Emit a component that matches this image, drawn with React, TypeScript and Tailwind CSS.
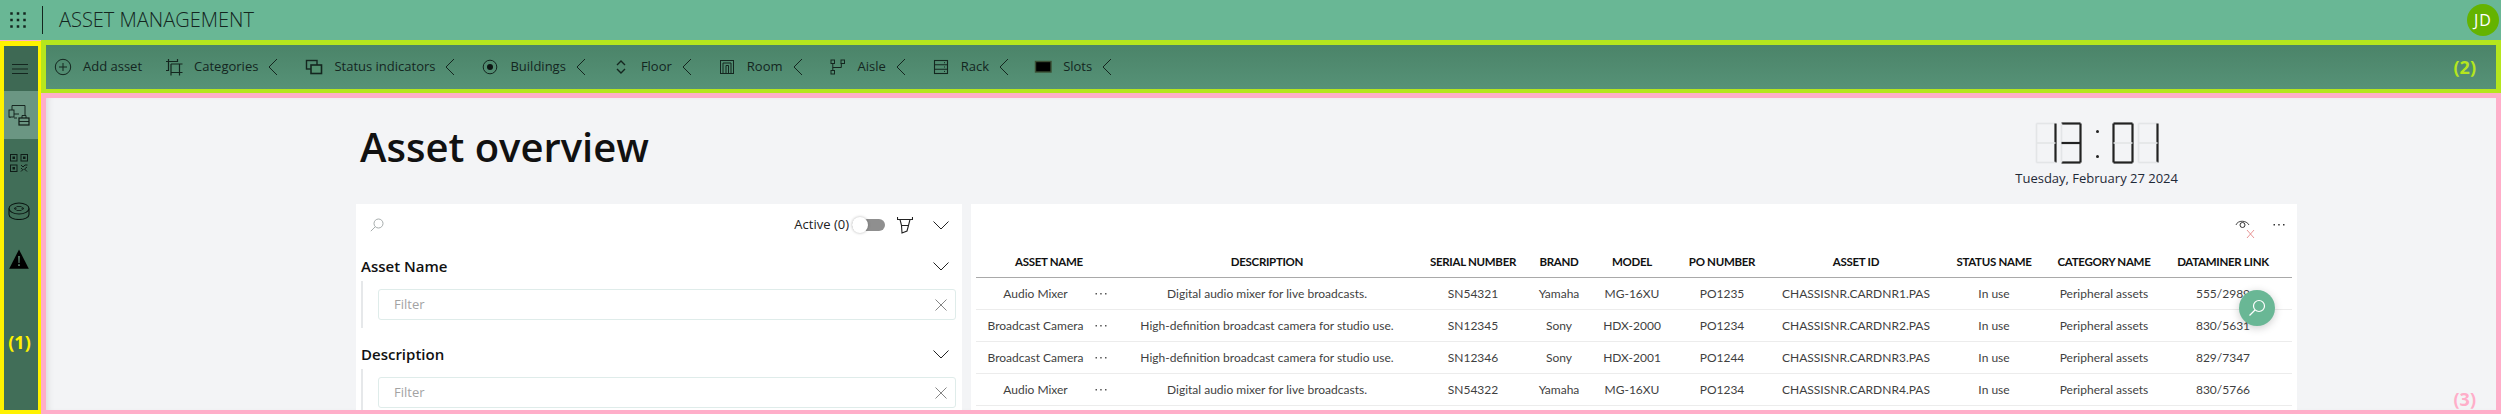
import React from 'react'

const columns = 'grid grid-cols-[146px_290px_122px_50px_96px_84px_184px_92px_128px_123px]'

const headers = ['ASSET NAME', 'DESCRIPTION', 'SERIAL NUMBER', 'BRAND', 'MODEL', 'PO NUMBER', 'ASSET ID', 'STATUS NAME', 'CATEGORY NAME', 'DATAMINER LINK']

const rows = [
  ['Audio Mixer', 'Digital audio mixer for live broadcasts.', 'SN54321', 'Yamaha', 'MG-16XU', 'PO1235', 'CHASSISNR.CARDNR1.PAS', 'In use', 'Peripheral assets', '555/2989'],
  ['Broadcast Camera', 'High-definition broadcast camera for studio use.', 'SN12345', 'Sony', 'HDX-2000', 'PO1234', 'CHASSISNR.CARDNR2.PAS', 'In use', 'Peripheral assets', '830/5631'],
  ['Broadcast Camera', 'High-definition broadcast camera for studio use.', 'SN12346', 'Sony', 'HDX-2001', 'PO1244', 'CHASSISNR.CARDNR3.PAS', 'In use', 'Peripheral assets', '829/7347'],
  ['Audio Mixer', 'Digital audio mixer for live broadcasts.', 'SN54322', 'Yamaha', 'MG-16XU', 'PO1234', 'CHASSISNR.CARDNR4.PAS', 'In use', 'Peripheral assets', '830/5766'],
]

const Svg = ({ size = 20, children, className = '' }: { size?: number; children: React.ReactNode; className?: string }) => (
  <svg width={size} height={size} viewBox="0 0 20 20" fill="none" stroke="#14261f" strokeWidth="1" className={className}>
    {children}
  </svg>
)

const toolbarIcons: Record<string, React.ReactNode> = {
  add: (
    <>
      <circle cx="10" cy="10" r="7.7" />
      <path d="M10 6v8M6 10h8" />
    </>
  ),
  categories: (
    <>
      <path d="M4.500 2v12M2 4.500h12M13.500 2v3M7 15.500h11.500M15.500 7v11.500M7 7v11.500M7 7h11.500M2 13.500h3" strokeWidth="1.200" />
    </>
  ),
  status: (
    <>
      <rect x="2.500" y="3.500" width="10.500" height="8.500" strokeWidth="1.400" />
      <rect x="7" y="8" width="10.500" height="8.500" fill="#52906f" strokeWidth="1.600" />
    </>
  ),
  buildings: (
    <>
      <circle cx="10" cy="10" r="6.800" />
      <circle cx="10" cy="10" r="3" fill="#0c1512" stroke="none" />
    </>
  ),
  floor: <path d="M6 8l4-4 4 4M6 12l4 4 4-4" strokeWidth="1.400" />,
  room: (
    <>
      <rect x="3.500" y="3.500" width="13" height="13" />
      <path d="M6 16.500V6h8v10.500M9 16.500V8.500h2.500v8" />
    </>
  ),
  aisle: (
    <>
      <rect x="3" y="3" width="3.500" height="3.500" />
      <rect x="13" y="3" width="3.500" height="3.500" />
      <rect x="3" y="13.500" width="3.500" height="3.500" />
      <path d="M4.800 6.500v7M4.800 10.500h8.500V6.500" />
    </>
  ),
  rack: (
    <>
      <rect x="3.500" y="3.500" width="13" height="13" strokeWidth="1.100" />
      <path d="M3.500 7.800h13M3.500 12.200h13" strokeWidth="1.100" />
      <path d="M13 5.700h2M13 10h2M13 14.400h2" strokeDasharray="1 1" />
    </>
  ),
  slots: <rect x="2.500" y="4.500" width="15.500" height="10.500" fill="#000" stroke="#3a4d33" strokeWidth="1.400" />,
}

const toolbarItems = [
  { icon: 'add', label: 'Add asset', chevron: false, gap: 'mr-[22px]' },
  { icon: 'categories', label: 'Categories', chevron: true, gap: 'mr-[25px]' },
  { icon: 'status', label: 'Status indicators', chevron: true, gap: 'mr-6' },
  { icon: 'buildings', label: 'Buildings', chevron: true, gap: 'mr-6' },
  { icon: 'floor', label: 'Floor', chevron: true, gap: 'mr-6' },
  { icon: 'room', label: 'Room', chevron: true, gap: 'mr-6' },
  { icon: 'aisle', label: 'Aisle', chevron: true, gap: 'mr-6' },
  { icon: 'rack', label: 'Rack', chevron: true, gap: 'mr-[23px]' },
  { icon: 'slots', label: 'Slots', chevron: true, gap: 'mr-0' },
]

const ChevronLeft = () => (
  <svg width="12" height="18" viewBox="0 0 12 18" fill="none" stroke="#14261f" strokeWidth="1">
    <path d="M10 1L2 9l8 8" />
  </svg>
)

const ChevronDown = () => (
  <svg width="16" height="9" viewBox="0 0 16 9" fill="none" stroke="#222" strokeWidth="1">
    <path d="M0.500 0.500L8 8l7.500-7.500" />
  </svg>
)

const Dots = ({ color = '#333' }: { color?: string }) => (
  <svg width="12" height="4" viewBox="0 0 12 4" fill={color}>
    <rect x="0.500" y="1" width="1.500" height="1.500" />
    <rect x="5.200" y="1" width="1.500" height="1.500" />
    <rect x="10" y="1" width="1.500" height="1.500" />
  </svg>
)

const segments: Record<string, string> = {
  a: 'M1.500 1.500H20.500',
  b: 'M20.500 1.500V21',
  c: 'M20.500 21V40.500',
  d: 'M1.500 40.500H20.500',
  e: 'M1.500 21V40.500',
  f: 'M1.500 1.500V21',
  g: 'M1.500 21H20.500',
}

const Digit = ({ on }: { on: string }) => (
  <svg width="22" height="42" viewBox="0 0 22 42" fill="none">
    {Object.keys(segments).map((k) => (
      <path key={k} d={segments[k]} stroke={on.includes(k) ? '#222' : '#e3e5e7'} strokeWidth={on.includes(k) ? 2.2 : 1.6} />
    ))}
  </svg>
)

const FilterSection = ({ label }: { label: string }) => (
  <div className="mb-[14px]">
    <div className="flex h-6 items-center justify-between pl-[5px] pr-[13px]">
      <span className="text-[15px] font-semibold leading-[22px] text-[#111]">{label}</span>
      <ChevronDown />
    </div>
    <div className="ml-[5px] mr-[6px] mt-[3px] h-[47px] border-l-2 border-[#e6e8ea] pl-[15px] pt-2">
      <div className="flex h-[31px] items-center justify-between rounded-[3px] border border-[#dfecea] bg-white pl-[15px] pr-[8px]">
        <span className="pt-px text-[13px] text-[#a3a3a3]">Filter</span>
        <svg width="12" height="12" viewBox="0 0 12 12" stroke="#777" strokeWidth="0.9" fill="none">
          <path d="M0.500 0.500l11 11M11.500 0.500l-11 11" />
        </svg>
      </div>
    </div>
  </div>
)

export default function App() {
  return (
    <div className="h-[414px] w-[2501px] overflow-hidden bg-[#ffaec9] font-['Open_Sans',sans-serif] text-[#14261f]">
      <header className="flex h-10 items-center bg-[#69b795]">
        <svg width="16" height="16" viewBox="0 0 16 16" fill="#14261f" className="ml-[10px]">
          {[1.5, 8, 14.5].map((y) =>
            [1.5, 8, 14.5].map((x) => <rect key={`${x}-${y}`} x={x - 1.25} y={y - 1.25} width="2.5" height="2.5" />)
          )}
        </svg>
        <div className="ml-[16px] h-7 w-px bg-[#14261f]" />
        <h1 className="ml-4 text-[20px] font-light text-[#14261f]">ASSET MANAGEMENT</h1>
        <div className="ml-auto mr-[2px] flex h-8 w-8 items-center justify-center rounded-full bg-[#64b300] text-[16px] tracking-[1px] text-white">
          JD
        </div>
      </header>

      <div className="flex">
        <aside className="relative mt-px h-[373px] w-[41px] border-b-4 border-l-4 border-r-[3px] border-t-[5px] border-[#fff200] bg-[#416e58]">
          <div className="flex h-[45px] items-center justify-center bg-[#3e6954] pr-[3px]">
            <svg width="16" height="10" viewBox="0 0 16 10" stroke="#14261f" strokeWidth="1.1">
              <path d="M0 0.500h16M0 5h16M0 9.500h16" />
            </svg>
          </div>
          <div className="flex h-12 items-center justify-center bg-[#6b9683] pr-1">
            <svg width="22" height="22" viewBox="0 0 22 22" fill="none" stroke="#0f1c17" strokeWidth="0.900">
              <rect x="1" y="6" width="5" height="7" />
              <path d="M6 10h5M4 6V1.500h13V11M2 13v1M6 14h3" />
              <rect x="11" y="14" width="10" height="7" strokeWidth="1.200" />
              <path d="M14 14V11.500h4V14M11 17.500h10" />
            </svg>
          </div>
          <div className="flex h-12 items-center justify-center pr-1">
            <svg width="20" height="20" viewBox="0 0 20 20" fill="none" stroke="#0f1c17" strokeWidth="1">
              <rect x="1.500" y="1.500" width="6.500" height="6.500" />
              <rect x="12" y="1.500" width="6.500" height="6.500" />
              <rect x="1.500" y="12" width="6.500" height="6.500" />
              <rect x="4" y="4" width="1.500" height="1.500" fill="#0f1c17" />
              <rect x="14.500" y="4" width="1.500" height="1.500" fill="#0f1c17" />
              <rect x="4" y="14.500" width="1.500" height="1.500" fill="#0f1c17" />
              <path d="M12 12l2 2 2-2h2.500M18 14l-2.500 2 2.500 2.500M12 18.500l2.500-2.500M12 15l1.500 1.500" />
            </svg>
          </div>
          <div className="flex h-12 items-center justify-center pr-[5px]">
            <svg width="22" height="18" viewBox="0 0 22 18" fill="none" stroke="#0a1511" strokeWidth="1.100">
              <ellipse cx="11" cy="6.500" rx="10" ry="5.500" />
              <path d="M1 6.500v6c0 3 4.500 5 10 5s10-2 10-5v-6" />
              <path d="M8.500 4.500h5M8.500 8.500h5M6 6.500l2-1v2zM16 6.500l-2-1v2z" strokeWidth="0.800" />
            </svg>
          </div>
          <div className="flex h-12 items-center justify-center pr-[5px]">
            <svg width="20" height="20" viewBox="0 0 20 20">
              <path d="M10 0.500L19.800 19.800H0.200z" fill="#000" />
              <path d="M9.200 7h1.600l-0.300 7h-1zM9.200 15.200h1.600v1.800H9.200z" fill="#5f8a76" />
            </svg>
          </div>
          <span className="absolute left-[-1px] top-[283px] w-[33px] text-center text-[18px] font-bold text-[#fff200]">(1)</span>
        </aside>

        <div className="flex w-[2460px] flex-col">
          <nav className="relative flex h-[53px] items-center border-b-4 border-l-[5px] border-r-[5px] border-t-[5px] border-[#b5e61d] bg-linear-to-b from-[#4b8469] to-[#569277] pl-[7px] text-[13px] text-[#14261f]">
            {toolbarItems.map((item) => (
              <div key={item.label} className={`${item.gap} flex items-center`}>
                <Svg>{toolbarIcons[item.icon]}</Svg>
                <span className="ml-[10px] whitespace-nowrap">{item.label}</span>
                {item.chevron && (
                  <span className="ml-[9px]">
                    <ChevronLeft />
                  </span>
                )}
              </div>
            ))}
            <span className="absolute right-[20px] top-[9px] text-[18px] font-bold text-[#b5e61d]">(2)</span>
          </nav>

          <main className="relative h-[321px] overflow-hidden border-b-4 border-l-[5px] border-r-[5px] border-t-[5px] border-[#ffaec9] bg-[#f3f4f6] pl-[310px] pr-[199px] shadow-[inset_6px_0_6px_-4px_rgba(0,0,0,0.1)]">
            <div className="flex h-[106px] justify-between">
              <h2 className="pl-[4px] pt-[22px] text-[40px] font-semibold leading-[54px] text-[#111]">Asset overview</h2>
              <div className="flex flex-col items-center pr-[119px] pt-[24px]">
                <div className="flex items-start">
                  <div className="mr-[3px]"><Digit on="bc" /></div>
                  <Digit on="abcdg" />
                  <div className="relative h-[42px] w-[30px]">
                    <span className="absolute left-[14px] top-[8px] h-[3px] w-[3px] rounded-full bg-[#222]" />
                    <span className="absolute left-[14px] top-[33px] h-[3px] w-[3px] rounded-full bg-[#222]" />
                  </div>
                  <div className="mr-[3px]"><Digit on="abcdef" /></div>
                  <Digit on="bc" />
                </div>
                <span className="mt-[5px] text-[13px] text-[#1f2937]">Tuesday, February 27 2024</span>
              </div>
            </div>

            <div className="flex h-[206px] gap-[9px]">
              <section className="w-[606px] bg-white">
                <div className="flex h-[42px] items-center pl-[14px] pr-[13px]">
                  <svg width="14" height="14" viewBox="0 0 14 14" fill="none" stroke="#9ca3a3" strokeWidth="0.900">
                    <circle cx="8.500" cy="5.500" r="4.500" />
                    <path d="M5.200 8.800L0.800 13.200" />
                  </svg>
                  <span className="ml-auto text-[13px] text-[#222]">Active (0)</span>
                  <span className="relative ml-[3px] h-3 w-[33px] rounded-full bg-[#8f8f8f]">
                    <span className="absolute left-0 top-[-2px] h-4 w-4 rounded-full bg-white shadow-[0_0_3px_rgba(0,0,0,0.3)]" />
                  </span>
                  <svg width="16" height="17" viewBox="0 0 16 17" fill="none" stroke="#222" strokeWidth="1.100" className="ml-[12px]">
                    <path d="M0.500 0v2.500h15V0M3 2.500l1.500 6h7l1.500-6M4.500 8.500l0.500 7.500 5-2 1.500-5.500" />
                  </svg>
                  <span className="ml-[20px]"><ChevronDown /></span>
                </div>
                <div className="mt-2">
                  <FilterSection label="Asset Name" />
                  <FilterSection label="Description" />
                </div>
              </section>

              <section className="relative flex-1 bg-white pl-[5px] pr-[5px] font-['Lato',sans-serif]">
                <div className="flex h-[42px] items-center justify-end pr-[7px]">
                  <svg width="20" height="22" viewBox="0 0 20 22" fill="none" className="mr-[18px] mt-[6px]">
                    <path d="M1 8c1.500-5 10.500-5 13 0" stroke="#333" strokeWidth="0.900" />
                    <circle cx="7.500" cy="8" r="2.500" stroke="#333" strokeWidth="1" />
                    <path d="M12 13l7 8M19 13l-7 8" stroke="#e58a8a" strokeWidth="0.900" />
                  </svg>
                  <Dots />
                </div>
                <div className={`${columns} h-8 items-center border-b border-[#a9a9a9] text-center text-[11.500px] font-bold tracking-[-0.3px] text-[#111]`}>
                  {headers.map((h, i) => (
                    <div key={h} className={i === 9 ? 'pr-[13px]' : ''}>{h}</div>
                  ))}
                </div>
                {rows.map((row) => (
                  <div key={row[2]} className={`${columns} h-8 items-center border-b border-[#ececec] text-center text-[12px] text-[#3f3f3f] first-of-type:h-[31px]`}>
                    {row.map((cell, i) =>
                      i === 0 ? (
                        <div key={i} className="flex items-center">
                          <span className="w-[119px] whitespace-nowrap">{cell}</span>
                          <Dots color="#555" />
                        </div>
                      ) : (
                        <div key={i} className={i === 9 ? 'whitespace-nowrap pr-[13px]' : 'whitespace-nowrap'}>{cell}</div>
                      )
                    )}
                  </div>
                ))}
                <button className="absolute left-[1268px] top-[86px] flex h-9 w-9 items-center justify-center rounded-full bg-[#69b795] shadow-[0_2px_8px_rgba(0,0,0,0.2)]">
                  <svg width="18" height="18" viewBox="0 0 18 18" fill="none" stroke="#fff" strokeWidth="1.200">
                    <circle cx="11" cy="7" r="5.500" />
                    <path d="M7 11L1.500 16.500" />
                  </svg>
                </button>
              </section>
            </div>
            <span className="absolute right-[20px] bottom-[-3px] text-[18px] font-bold text-[#ffaec9]">(3)</span>
          </main>
        </div>
      </div>
    </div>
  )
}
